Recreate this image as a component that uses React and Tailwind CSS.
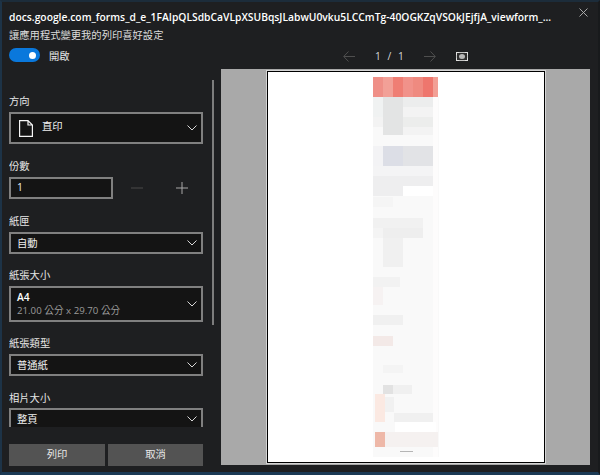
const font = { fontFamily: '"Open Sans","Noto Sans CJK TC",sans-serif' };

function Chevron({ className = "" }) {
  return (
    <svg width="10" height="6" viewBox="0 0 10 6" fill="none" stroke="#d8d8d8" strokeWidth="1" className={className}>
      <path d="M0.5 0.5 L5 5 L9.5 0.5" />
    </svg>
  );
}

function Label({ children, className = "" }) {
  return <div className={`text-[10.3px] leading-[14px] text-[#e6e6e6] ${className}`}>{children}</div>;
}

function Select({ children, h = "h-[22px]", icon }) {
  return (
    <div className={`w-[194px] ${h} border-2 border-[#808080] bg-[#141414] flex items-center pl-[6px] pr-[4px] text-[10.3px] text-[#f0f0f0]`}>
      {icon}
      <div className="flex-1 leading-[13px]">{children}</div>
      <Chevron />
    </div>
  );
}

const blocks = [
  [0, 20, 66, 378, "#f9f9f9"],
  [60, 20, 5, 378, "#fdfcfc"],
  [0, 0, 10, 20, "#ef8f87"], [10, 0, 10, 20, "#f2a097"], [20, 0, 10, 20, "#ef7e74"], [30, 0, 10, 20, "#f1928a"],
  [40, 0, 10, 20, "#ef8a80"], [50, 0, 10, 20, "#ee766d"], [60, 0, 5, 20, "#f29f95"],
  [0, 20, 10, 20, "#f0f2f2"], [0, 40, 10, 10, "#f3f3f3"],
  [10, 20, 20, 38, "#e3e4e4"], [30, 20, 30, 10, "#eceded"], [30, 30, 30, 10, "#f3f3f3"], [30, 40, 30, 10, "#ecedec"], [30, 50, 30, 8, "#f3f3f3"],
  [10, 69, 20, 20, "#dcdee6"], [30, 69, 30, 20, "#e2e3e6"], [0, 69, 10, 20, "#f3f3f5"],
  [0, 89, 60, 10, "#f4f4f5"], [0, 99, 60, 10, "#eeeeef"], [0, 109, 30, 10, "#eeeeef"], [30, 109, 30, 10, "#ffffff"],
  [0, 120, 20, 10, "#f5f5f5"],
  [0, 141, 50, 10, "#f1f1f1"], [10, 151, 40, 10, "#eeeeee"], [0, 151, 10, 10, "#f4f4f4"],
  [10, 161, 20, 29, "#f0f0f0"], [0, 200, 27, 10, "#f2f2f2"], [0, 210, 10, 18, "#f6f2f2"],
  [0, 238, 30, 10, "#f0f0f0"], [0, 259, 20, 10, "#f3e9e7"], [10, 288, 20, 8, "#f4f4f4"],
  [10, 308, 10, 9, "#e2e2e2"], [20, 308, 19, 9, "#f0f0f0"],
  [2, 317, 10, 28, "#fbe9e2"], [12, 320, 9, 15, "#f1f1f1"], [21, 336, 39, 9, "#f0f0f0"], [22, 345, 41, 10, "#ffffff"],
  [12, 355, 53, 15, "#f5f1f0"], [2, 355, 10, 15, "#eeb8a8"],
  [27, 374, 13, 1, "#b5b5b5"],
];

export default function App() {
  return (
    <div style={font} className="w-[600px] h-[475px] bg-[#1e1f21] border-t-2 border-l-2 border-r-2 border-b-[3px] border-t-[#1c2c3a] border-l-[#1d3347] border-r-[#181a1c] border-b-[#1b3a55] flex flex-col overflow-hidden">
      <div className="flex justify-between pl-[7px] pr-[10px] h-[42px] shrink-0">
        <div className="pt-[8px]">
          <div className="text-[10.3px] leading-[15px] font-semibold text-white whitespace-nowrap">
            docs.google.com_forms_d_e_1FAIpQLSdbCaVLpXSUBqsJLabwU0vku5LCCmTg-40OGKZqVSOkJEjfjA_viewform_...
          </div>
          <div className="text-[10.3px] leading-[14px] mt-[3px] text-[#dcdcdc]">讓應用程式變更我的列印喜好設定</div>
        </div>
        <svg width="9" height="9" viewBox="0 0 9 9" stroke="#b5b5b5" strokeWidth="0.9" className="mt-[6px] shrink-0">
          <path d="M0.5 0.5 L8.5 8.5 M8.5 0.5 L0.5 8.5" />
        </svg>
      </div>

      <div className="flex flex-1 min-h-0">
        <div className="w-[219px] shrink-0 relative flex flex-col pl-[7px]">
          <div className="flex items-center gap-[9px] h-[14px] mt-[4px] shrink-0">
            <div className="w-[31px] h-[14px] rounded-full bg-[#0a78dc] flex items-center justify-end pr-[4px]">
              <div className="w-[7px] h-[7px] rounded-full bg-white" />
            </div>
            <span className="text-[10.3px] leading-[14px] translate-y-[1px] text-[#e6e6e6]">開啟</span>
          </div>

          <div className="absolute left-[210px] top-[36px] w-[2px] h-[245px] bg-[#7d7d7d]" />

          <div className="h-[365px] overflow-hidden shrink-0 pt-[32px]">
            <Label>方向</Label>
            <div className="mt-[4px]">
              <Select h="h-[32px]" icon={
                <svg width="14" height="17" viewBox="0 0 14 17" fill="none" stroke="#f5f5f5" strokeWidth="1.2" className="mr-[9px] ml-[2px] shrink-0">
                  <path d="M0.6 0.6 H9 L13.4 5 V16.4 H0.6 Z M9 0.6 V5 H13.4" />
                </svg>
              }>
                <div className="-mt-[3px]">直印</div>
              </Select>
            </div>

            <Label className="mt-[15px]">份數</Label>
            <div className="flex items-center mt-[4px]">
              <div className="w-[104px] h-[22px] border-2 border-[#808080] bg-[#141414] flex items-center pl-[6px] text-[10.3px] font-medium text-[#f0f0f0]">1</div>
              <svg width="12" height="12" viewBox="0 0 12 12" stroke="#4a4a4a" strokeWidth="1" className="ml-[18px]">
                <path d="M0 6 H12" />
              </svg>
              <svg width="12" height="12" viewBox="0 0 12 12" stroke="#a8a8a8" strokeWidth="1" className="ml-[33px]">
                <path d="M0 6 H12 M6 0 V12" />
              </svg>
            </div>

            <Label className="mt-[15px]">紙匣</Label>
            <div className="mt-[4px]"><Select>自動</Select></div>

            <Label className="mt-[14px]">紙張大小</Label>
            <div className="mt-[4px]">
              <Select h="h-[36px]">
                <div className="font-semibold text-white">A4</div>
                <div className="text-[#9a9a9a] text-[9.7px]">21.00 公分 x 29.70 公分</div>
              </Select>
            </div>

            <Label className="mt-[14px]">紙張類型</Label>
            <div className="mt-[4px]"><Select>普通紙</Select></div>

            <Label className="mt-[15px]">相片大小</Label>
            <div className="mt-[3px]"><Select>整頁</Select></div>
          </div>

          <div className="flex gap-[3px] mt-[17px]">
            <div className="w-[96px] h-[22px] bg-[#535353] flex items-center justify-center text-[10.3px] text-[#e8e8e8]">列印</div>
            <div className="w-[95px] h-[22px] bg-[#535353] flex items-center justify-center text-[10.3px] text-[#e8e8e8]">取消</div>
          </div>
        </div>

        <div className="flex-1 flex flex-col pr-[8px]">
          <div className="h-[25px] shrink-0 flex items-center text-[10.3px] text-[#d8d8d8]">
            <svg width="12" height="11" viewBox="0 0 12 11" fill="none" stroke="#4f4f4f" strokeWidth="1" className="ml-[122px]">
              <path d="M12 5.5 H1 M5.5 0.5 L0.7 5.5 L5.5 10.5" />
            </svg>
            <span className="w-[69px] text-center tracking-[2px] pl-[2px]">1 / 1</span>
            <svg width="12" height="11" viewBox="0 0 12 11" fill="none" stroke="#4f4f4f" strokeWidth="1">
              <path d="M0 5.5 H11 M6.5 0.5 L11.3 5.5 L6.5 10.5" />
            </svg>
            <svg width="12" height="9" viewBox="0 0 12 9" className="ml-[20px] -mt-[1px]">
              <rect x="0.5" y="0.5" width="11" height="8" fill="#2e2e2e" stroke="#c4c4c4" />
              <path d="M0 0 H3 V1 H1 V3 H0 Z M12 0 H9 V1 H11 V3 H12 Z M0 9 H3 V8 H1 V6 H0 Z M12 9 H9 V8 H11 V6 H12 Z" fill="#e0e0e0" />
              <ellipse cx="6" cy="4.5" rx="3" ry="2.5" fill="#b8b8b8" />
            </svg>
          </div>
          <div className="h-[396px] bg-[#a9a9a9] flex justify-center items-center">
            <div className="w-[278px] h-[392px] bg-white border border-black ring-1 ring-[#d4d4d4] flex flex-col items-center pt-[5px] shrink-0">
              <svg width="66" height="380" viewBox="0 0 66 380" shapeRendering="crispEdges">
                {blocks.map(([x, y, w, h, c], i) => (
                  <rect key={i} x={x} y={y} width={w} height={h} fill={c} />
                ))}
              </svg>
            </div>
          </div>
        </div>
      </div>
    </div>
  );
}
